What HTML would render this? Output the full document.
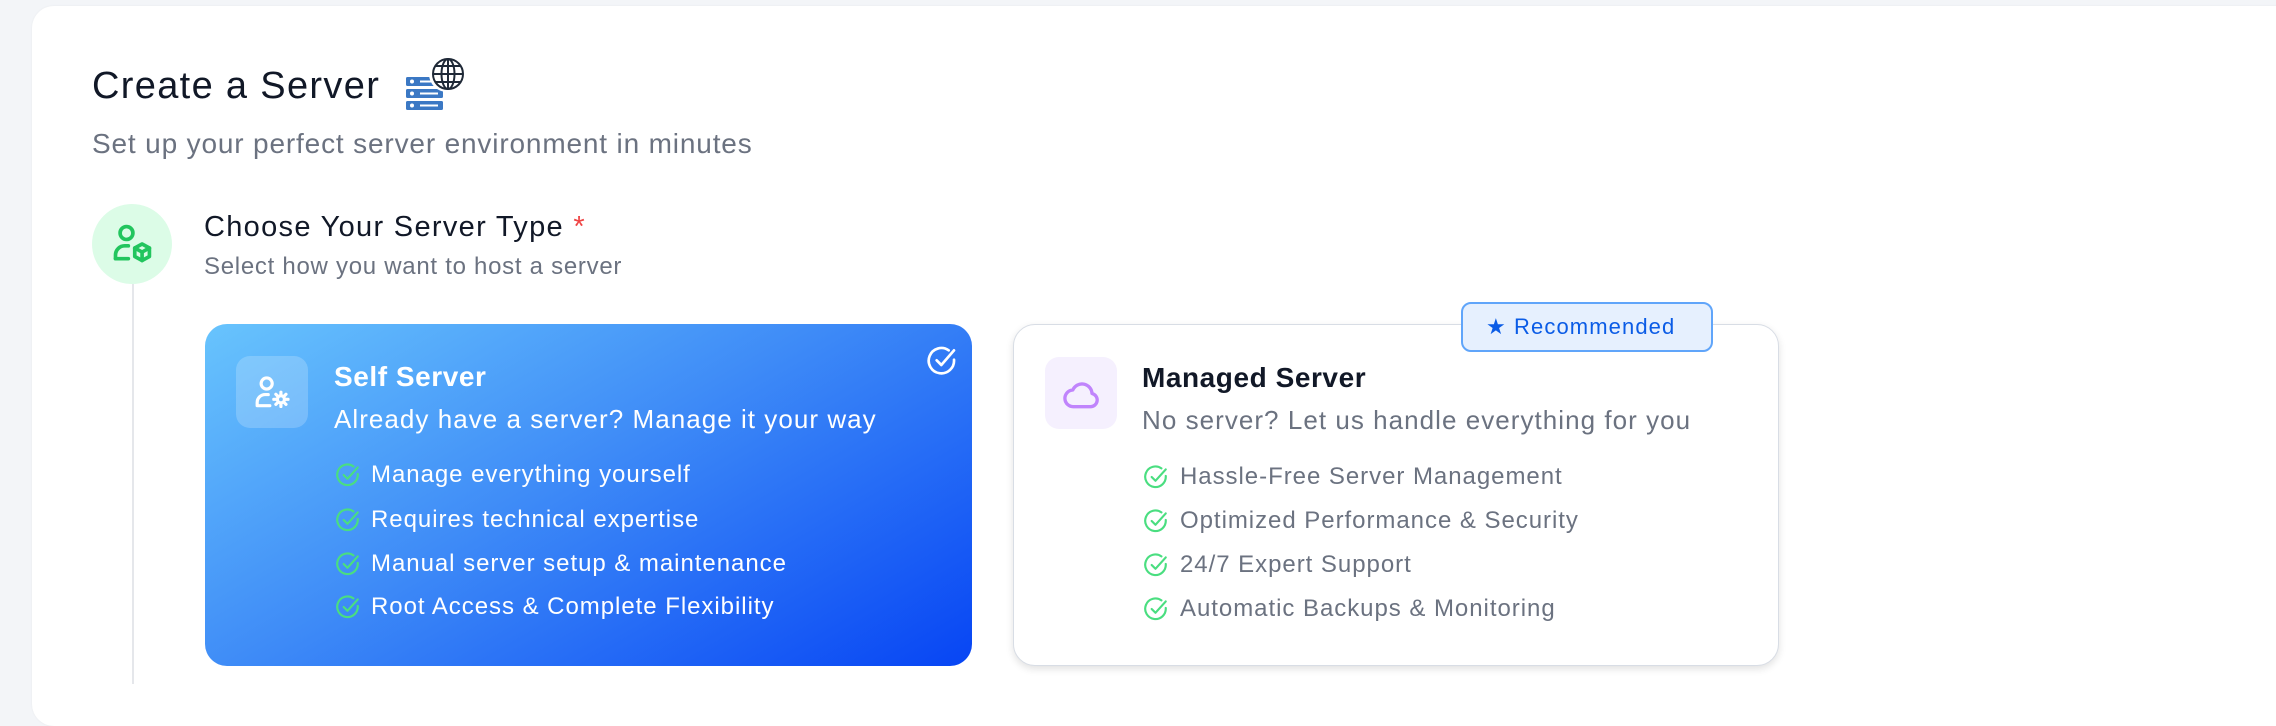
<!DOCTYPE html>
<html><head><meta charset="utf-8"><style>
*{margin:0;padding:0;box-sizing:border-box}
body{width:2276px;height:682px;overflow:hidden;background:#f3f5f8;font-family:"Liberation Sans",sans-serif;position:relative}
.panel{position:absolute;left:32px;top:6px;width:2300px;height:720px;background:#fff;border-radius:22px;box-shadow:0 0 2px rgba(0,0,0,.05)}
.t{position:absolute;line-height:1;white-space:nowrap;letter-spacing:0.04em}
.card{position:absolute;top:324px;height:342px;border-radius:22px}
.self{left:205px;width:767px;background:linear-gradient(150deg,#68c4fd 0%,#3f8cf7 45%,#0745f4 100%)}
.man{left:1013px;width:766px;background:#fff;border:1.5px solid #d8dde5;box-shadow:0 3px 8px rgba(0,0,0,.12)}
.ib{position:absolute;width:72px;height:72px;border-radius:14px}
.chk{position:absolute;width:26px;height:26px}
</style></head><body>
<div class="panel"></div>
<div class="t" style="left:92px;top:67px;font-size:38px;color:#111827;letter-spacing:0.035em">Create a Server</div>
<svg style="position:absolute;left:404px;top:56px" width="62" height="54" viewBox="0 0 62 54">
<g fill="#3b78c4"><rect x="2" y="21" width="37" height="9" rx="1.5"/><rect x="2" y="33" width="37" height="9" rx="1.5"/><rect x="2" y="45" width="37" height="9" rx="1.5"/></g>
<g fill="#fff"><circle cx="8" cy="25.5" r="2"/><circle cx="8" cy="37.5" r="2"/><circle cx="8" cy="49.5" r="2"/><rect x="16" y="24.5" width="18" height="2"/><rect x="16" y="36.5" width="18" height="2"/><rect x="16" y="48.5" width="18" height="2"/></g>
<circle cx="43" cy="18" r="18" fill="#fff"/>
<g fill="none" stroke="#1f2937" stroke-width="2"><circle cx="44" cy="18" r="15"/><ellipse cx="44" cy="18" rx="6.5" ry="15"/><line x1="29" y1="18" x2="59" y2="18"/><line x1="44" y1="3" x2="44" y2="33"/><path d="M31 10h26M31 26h26"/></g>
</svg>
<div class="t" style="left:92px;top:130px;font-size:28px;color:#6b7280;letter-spacing:0.03em">Set up your perfect server environment in minutes</div>
<div style="position:absolute;left:132px;top:284px;width:2px;height:400px;background:#e5e7eb"></div>
<div style="position:absolute;left:92px;top:204px;width:80px;height:80px;border-radius:50%;background:#dcfce7"></div>
<svg style="position:absolute;left:110px;top:222px" width="44" height="44" viewBox="0 0 24 24" fill="none" stroke="#22c55e" stroke-width="2" stroke-linecap="round" stroke-linejoin="round"><circle cx="9" cy="6" r="3.5"/><path d="M3 20v-2a5 5 0 0 1 5-5h2"/><path d="M3 20h7"/><path d="M17.5 12l4 2.2v4.6l-4 2.2-4-2.2v-4.6z"/><path d="M13.5 14.2l4 2.2 4-2.2M17.5 16.4V21"/></svg>
<div class="t" style="left:204px;top:213px;font-size:29px;color:#111827;letter-spacing:0.045em">Choose Your Server Type <span style="color:#ef4444">*</span></div>
<div class="t" style="left:204px;top:255px;font-size:24px;color:#6b7280;letter-spacing:0.03em">Select how you want to host a server</div>

<div class="card self">
<div class="ib" style="left:31px;top:32px;background:rgba(255,255,255,.2)"></div>
<svg style="position:absolute;left:49px;top:50px" width="38" height="38" viewBox="0 0 24 24" fill="none" stroke="#fff" stroke-width="2" stroke-linecap="round"><circle cx="8" cy="6" r="3.5"/><path d="M2 20v-2a5 5 0 0 1 5-5h2M2 20h8"/><circle cx="17" cy="16" r="2.2"/><path d="M17 11.5v1.5M17 19v1.5M12.5 16h1.5M20 16h1.5M13.8 12.8l1 1M19.2 18.2l1 1M13.8 19.2l1-1M19.2 13.8l1-1"/></svg>
<div class="t" style="left:129px;top:39px;font-size:28px;color:#fff;font-weight:bold;letter-spacing:0.02em">Self Server</div>
<div class="t" style="left:129px;top:82px;font-size:26px;color:#fff">Already have a server? Manage it your way</div>
<svg style="position:absolute;left:721px;top:21px" width="32" height="32" viewBox="0 0 24 24" fill="none" stroke="#fff" stroke-width="2" stroke-linecap="round" stroke-linejoin="round"><path d="M21 11a9.5 9.5 0 1 1-4-7"/><path d="M8 11.5l3.5 3.5L21 4"/></svg>
</div>
<div class="card man">
<div class="ib" style="left:31px;top:32px;background:#f5f0fe"></div>
<svg style="position:absolute;left:48px;top:50px" width="40" height="40" viewBox="0 0 24 24" fill="none" stroke="#c084fc" stroke-width="2" stroke-linejoin="round"><path d="M7 19h10a4 4 0 0 0 1-7.9A6 6 0 0 0 6.5 9 5 5 0 0 0 7 19z"/></svg>
<div class="t" style="left:128px;top:39px;font-size:28px;color:#111827;font-weight:bold;letter-spacing:0.02em">Managed Server</div>
<div class="t" style="left:128px;top:82px;font-size:26px;color:#6b7280">No server? Let us handle everything for you</div>
</div>
<div style="position:absolute;left:1461px;top:302px;width:252px;height:50px;background:#e6f0fe;border:2px solid #60a5fa;border-radius:10px"></div>
<div class="t" style="left:1486px;top:316px;font-size:22px;color:#0b5ce6;letter-spacing:0.05em">★ Recommended</div>

<svg width="0" height="0" style="position:absolute"><defs><symbol id="ck" viewBox="0 0 24 24"><path d="M21 11a9.5 9.5 0 1 1-4-7" fill="none" stroke="#4ade80" stroke-width="2" stroke-linecap="round"/><path d="M8 12l3.5 3.5L21 5" fill="none" stroke="#4ade80" stroke-width="2" stroke-linecap="round" stroke-linejoin="round"/></symbol></defs></svg>

<svg class="chk" style="left:335px;top:462px"><use href="#ck"/></svg>
<svg class="chk" style="left:335px;top:507px"><use href="#ck"/></svg>
<svg class="chk" style="left:335px;top:551px"><use href="#ck"/></svg>
<svg class="chk" style="left:335px;top:594px"><use href="#ck"/></svg>
<div class="t" style="left:371px;top:463px;font-size:24px;color:#fff">Manage everything yourself</div>
<div class="t" style="left:371px;top:508px;font-size:24px;color:#fff">Requires technical expertise</div>
<div class="t" style="left:371px;top:552px;font-size:24px;color:#fff">Manual server setup &amp; maintenance</div>
<div class="t" style="left:371px;top:595px;font-size:24px;color:#fff">Root Access &amp; Complete Flexibility</div>

<svg class="chk" style="left:1143px;top:464px"><use href="#ck"/></svg>
<svg class="chk" style="left:1143px;top:508px"><use href="#ck"/></svg>
<svg class="chk" style="left:1143px;top:552px"><use href="#ck"/></svg>
<svg class="chk" style="left:1143px;top:596px"><use href="#ck"/></svg>
<div class="t" style="left:1180px;top:465px;font-size:24px;color:#6b7280">Hassle-Free Server Management</div>
<div class="t" style="left:1180px;top:509px;font-size:24px;color:#6b7280">Optimized Performance &amp; Security</div>
<div class="t" style="left:1180px;top:553px;font-size:24px;color:#6b7280">24/7 Expert Support</div>
<div class="t" style="left:1180px;top:597px;font-size:24px;color:#6b7280">Automatic Backups &amp; Monitoring</div>
</body></html>
